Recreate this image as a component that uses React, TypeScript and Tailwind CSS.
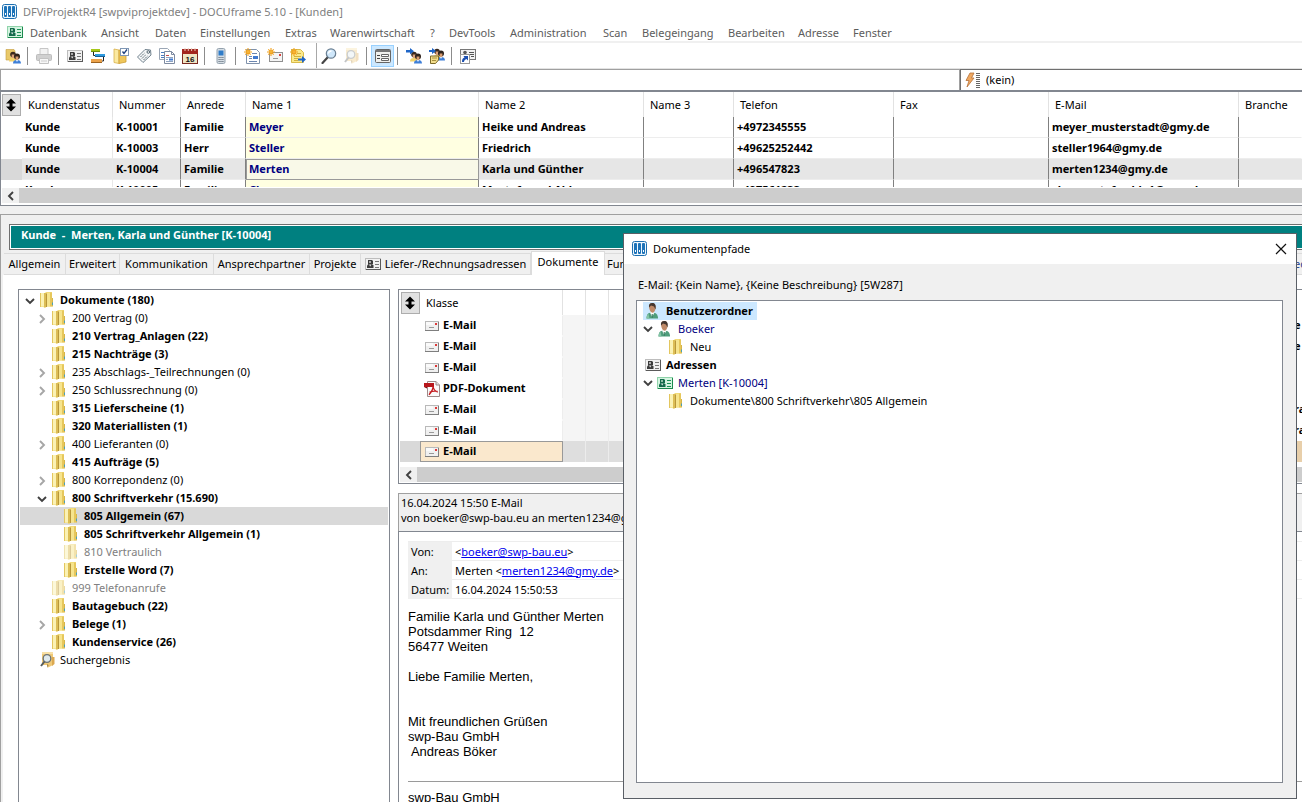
import type { ReactNode } from 'react'
import clsx from 'clsx'

interface IconProps {
  className?: string
}

function Svg({ children, className }: { children: ReactNode; className?: string }) {
  return (
    <svg viewBox="0 0 16 16" aria-hidden="true" className={clsx('w-4 h-4 shrink-0', className)}>
      {children}
    </svg>
  )
}

/* ---------- Icons ---------- */

function LogoIcon() {
  return (
    <Svg>
      <rect x="0.5" y="0.5" width="14" height="14" rx="2" fill="#eef7fd" stroke="#1c6fb0" />
      {[2, 6, 10].map(x => (
        <g key={x}>
          <rect x={x} y="2" width="3" height="11" rx="1" fill="#1c72b8" />
          <rect x={x + 1} y="9" width="1" height="2" fill="#fff" />
        </g>
      ))}
    </Svg>
  )
}

function CardIcon({ green }: { green?: boolean }) {
  const ink = green ? '#136b4c' : '#3c3c3c'
  return (
    <Svg>
      <rect x="0" y="2" width="16" height="12" fill={green ? '#8fd3aa' : '#bdbdbd'} />
      <path d="M1 13h15v1H1zM15 3h1v11h-1z" fill={green ? '#1d8a50' : '#5a5a5a'} />
      <rect x="1" y="3" width="14" height="10" fill={green ? '#d4f4e0' : '#f1f1f1'} />
      <path d="M3 4h4l1 1v3H3z" fill={ink} />
      <path d="M4 5h2v2H4z" fill={green ? '#8fc0a8' : '#aaa'} />
      <path d="M2 12V9.500l1.500-1.500h3.500L8.500 9.500V12z" fill={ink} />
      <path d="M4 8.500l1.200 2L6.500 8.500z" fill="#eee" />
      <path d="M10 5.500h4M10 8.500h4M10 11.500h4" stroke={green ? '#1c9159' : '#777'} />
    </Svg>
  )
}

function FolderIcon({ className }: IconProps) {
  return (
    <Svg className={className}>
      <path d="M0 1h5l1-1h6v14.500H6L4.500 16 3.500 15H0z" fill="#f2db7a" />
      <path d="M0 1h1v14H0z" fill="#e3c65f" />
      <path d="M1 1h3v13.500H1z" fill="#fbf2b4" />
      <path d="M4 1h2v14.500L4 15z" fill="#dcbd55" />
      <path d="M6 1.500h1V15H6z" fill="#b8973a" />
      <path d="M7 1h3v13.500H7z" fill="#f6e48e" />
      <path d="M10 .5h2V14.500h-2z" fill="#e6c75c" />
      <path d="M12 6h1v8.500h-1z" fill="#d7b548" />
      <path d="M12 10.500h1V13h-1z" fill="#4aa0b8" />
    </Svg>
  )
}

function SearchFolderIcon({ className }: IconProps) {
  return (
    <Svg className={className}>
      <path d="M2 0h11v13l-5 2.500L7 13H2z" fill="#eec877" />
      <path d="M12 5h2.500v7L12 14z" fill="#dba850" />
      <path d="M2 0h11v2H2z" fill="#f8e0a6" />
      <path d="M7 12l.5 4 1-3z" fill="#9b7a3a" />
      <circle cx="7" cy="6.500" r="3.800" fill="#dfe9ec" stroke="#6b7376" strokeWidth="1.300" />
      <path d="M4.500 9.500L1 14" stroke="#555c60" strokeWidth="2" />
    </Svg>
  )
}

function MailIcon() {
  return (
    <Svg>
      <rect x="1" y="3" width="14" height="10" fill="#b9b9b9" />
      <path d="M1 12h14v1H1zM14 4h1v9h-1z" fill="#7e7e7e" />
      <rect x="2" y="4" width="12" height="8" fill="#f0f0f0" />
      <path d="M2 4h7v3H2z" fill="#fafafa" />
      <rect x="11" y="5" width="2" height="2" fill="#dc3a3a" />
      <path d="M5 9.500h5" stroke="#999" />
    </Svg>
  )
}

function PdfIcon() {
  return (
    <Svg>
      <path d="M3.500.5h8.500l3.500 3.500v11.500h-12z" fill="#fafafa" stroke="#9e8a8a" />
      <path d="M12 .5V4h3.500" fill="#ddd" stroke="#9e8a8a" />
      <path d="M0 2h10v4H0z" fill="#b8161b" />
      <path d="M0 6h3v1.500z" fill="#7b0d10" />
      <path d="M9 5c.4 3.200-1.600 6-4 8.700M9 5c.2 3 1.800 5 4.800 6.200M5.500 11.300c2-1 5-1.500 8-1" fill="none" stroke="#c4191e" strokeWidth="1.300" />
    </Svg>
  )
}

function UserIcon() {
  return (
    <Svg>
      <path d="M1.500 15.500c0-4 1.500-6 5.500-6s6 2 6 6z" fill="#4f9d7c" />
      <path d="M1.500 15.500c0-2 .6-3.600 2-4.800l1 4.800z" fill="#83c4a5" />
      <path d="M5 9.500l2 4.500 2.500-4.500-2-1z" fill="#fff" />
      <path d="M6.700 11h1v3l-.5 1-.5-1z" fill="#256b4e" />
      <path d="M4 3.500C4 1 5.500 0 7.300 0 9.500 0 11 1.500 10.500 5c-.3 3-1.500 4.700-3 4.700S4.200 7 4 3.500z" fill="#c08a68" />
      <path d="M4 4.500C3.500 1.300 5 0 7.200 0c2.500 0 4.200 1.700 3.300 6.500l-1.500-3L6 2.500z" fill="#43362f" />
    </Svg>
  )
}

function PeopleShape() {
  return (
    <g>
      <circle cx="8" cy="6.500" r="2.800" fill="#3a2a20" />
      <path d="M6.700 6.500h3v3.500h-3z" fill="#dba27a" />
      <path d="M4 13.500c0-2.500 1-3.500 4-3.500s3 1 3 3.500z" fill="#f3d36a" />
      <circle cx="12" cy="8.500" r="3" fill="#2f231c" />
      <path d="M10.600 8.500h2.800v3.300h-2.800z" fill="#d99c70" />
      <path d="M8 15.500c0-2.600 1.500-3.500 4-3.500s4 1 4 3.500z" fill="#3e7fd8" />
      <path d="M11 12h2l-1 2z" fill="#fff" />
    </g>
  )
}

function FolderPeopleIcon() {
  return (
    <Svg>
      <path d="M1 1.500h8l1 1.500v9H1z" fill="#e9c96a" stroke="#c49c3c" strokeWidth=".6" />
      <PeopleShape />
    </Svg>
  )
}

function PrinterIcon() {
  return (
    <Svg>
      <path d="M4 .5h8V7H4z" fill="#f2f2f2" stroke="#c6c6c6" />
      <rect x=".5" y="6.500" width="15" height="6" rx="1" fill="#d0d0d0" stroke="#bdbdbd" />
      <path d="M3.500 10.500h9v5h-9z" fill="#f6f6f6" stroke="#c2c2c2" />
      <path d="M5 13h6" stroke="#ccc" />
    </Svg>
  )
}

function GanttIcon() {
  return (
    <Svg>
      <path d="M3.500 4v3.500H6M13.500 9v4H12" fill="none" stroke="#222" />
      <path d="M1 1h9v3H1z" fill="#a6c71a" />
      <path d="M1 3h9v1H1z" fill="#6f9010" />
      <path d="M5 6h10v3H5z" fill="#2f9be0" />
      <path d="M5 8h10v1H5z" fill="#1a5f94" />
      <path d="M1 11h11v4H1z" fill="#eba24a" />
      <path d="M1 14h11v1H1z" fill="#9c6320" />
    </Svg>
  )
}

function FolderCheckIcon() {
  return (
    <Svg>
      <path d="M1 1l5 1v13.500l-5-1z" fill="#fbe9a0" stroke="#d8b04a" strokeWidth=".8" />
      <path d="M6 2h7v12l-7 1.500z" fill="#efc65a" stroke="#cc9d35" strokeWidth=".8" />
      <rect x="7.500" y=".5" width="8" height="7" fill="#fff" stroke="#7f97b5" />
      <path d="M9.500 3.500l1.500 2 3-4" fill="none" stroke="#1d3f7d" strokeWidth="1.300" />
    </Svg>
  )
}

function TagIcon() {
  return (
    <Svg>
      <path d="M1.500 9L9 1.500l5.500.5.500 5L7 14.500z" fill="#f4f6f7" stroke="#71828e" />
      <circle cx="12.300" cy="4" r="1.300" fill="#fff" stroke="#51646f" />
      <path d="M4.500 9l4-4M6 10.500l4-4M7.500 12l4-4" stroke="#62727c" strokeDasharray="2 .6" />
    </Svg>
  )
}

function DocsIcon() {
  return (
    <Svg>
      <path d="M.5.500h8l2 2v9H.5z" fill="#fff" stroke="#9ba6b5" />
      <path d="M2 4.500h4M2 7.500h3M2 9.500h3" stroke="#4b7cc0" />
      <path d="M5.500 3.500h7l3 3v9h-10z" fill="#fff" stroke="#7d8aa0" />
      <path d="M12.500 3.500v3h3" fill="none" stroke="#7d8aa0" />
      <path d="M7 7.500h3" stroke="#c4504a" />
      <path d="M7 9.500h7M7 11.500h2M7 13.500h7" stroke="#8fa3bf" />
      <path d="M10 10.500h4v2h-4z" fill="#3f79d0" />
    </Svg>
  )
}

function CalendarIcon() {
  return (
    <Svg>
      <rect x=".5" y="1.500" width="15" height="14" fill="#efe5c4" stroke="#7b2a22" />
      <path d="M0 1h16v5H0z" fill="#a3251e" />
      <path d="M3 0v3M6.300 0v3M9.600 0v3M13 0v3" stroke="#e9c9b9" />
      <text x="8" y="13.500" fontSize="8" fontWeight="700" textAnchor="middle" fill="#111" fontFamily="Liberation Sans, sans-serif">16</text>
    </Svg>
  )
}

function PhoneIcon() {
  return (
    <Svg>
      <rect x="4" y=".5" width="8" height="15" rx="1.500" fill="#d5dde4" stroke="#93a1ad" />
      <rect x="5.500" y="2.500" width="5" height="5" fill="#2f7cc8" />
      <path d="M5.500 9.500h5M5.500 11.500h5M5.500 13.500h5" stroke="#5f6d7a" strokeDasharray="1.200 .7" />
    </Svg>
  )
}

function Spark() {
  return (
    <g stroke="#f0a11e" strokeWidth="1.100">
      <path d="M4 0v8M0 4h8M1.300 1.300l5.400 5.400M6.700 1.300L1.300 6.700" />
      <circle cx="4" cy="4" r="1.300" fill="#fbd25a" />
    </g>
  )
}

function NewDocIcon() {
  return (
    <Svg>
      <path d="M2.500 1.500h10l3 3v11h-13z" fill="#fff" stroke="#8092ab" />
      <path d="M8 5.500h5M5 8.500h3M5 10.500h3M5 13.500h8" stroke="#6b86b0" />
      <path d="M9 8h5v3H9z" fill="#3f79d0" />
      <Spark />
    </Svg>
  )
}

function NewMailIcon() {
  return (
    <Svg>
      <rect x="2.500" y="4.500" width="13" height="9" fill="#f4f4f4" stroke="#909090" />
      <path d="M6 10.500h5" stroke="#999" />
      <path d="M12 6h2v2h-2z" fill="#d8433c" />
      <Spark />
    </Svg>
  )
}

function NewExportIcon() {
  return (
    <Svg>
      <path d="M1.500 1.500h9l3 3v10h-12z" fill="#fbe98c" stroke="#d9bb4b" />
      <path d="M4 8.500h7M4 10.500h4M4 12.500h4M7 5.500h4" stroke="#d3b23d" />
      <path d="M8 10.500h4V8l4 3.500-4 3.500v-2.500H8z" fill="#1f66c8" />
      <Spark />
    </Svg>
  )
}

function MagnifierIcon() {
  return (
    <Svg>
      <path d="M6.500 9.500L1.500 15" stroke="#454545" strokeWidth="2.200" strokeLinecap="round" />
      <circle cx="10" cy="5.500" r="4.700" fill="#cfe7fa" stroke="#6a7f92" strokeWidth="1.200" />
      <path d="M7.500 5.500C7.700 3.700 9 3 10.500 3" stroke="#fff" strokeWidth="1.300" fill="none" />
    </Svg>
  )
}

function FormIcon() {
  return (
    <Svg>
      <rect x=".5" y="1.500" width="15" height="13" rx="1" fill="#f1f1ee" stroke="#666" />
      <path d="M1 3h14" stroke="#777" strokeWidth="2" />
      <path d="M2 7.500h3M2 10.500h3" stroke="#444" />
      <path d="M6.500 6.500h7v2h-7zM6.500 10.500h7v2h-7z" fill="#fff" stroke="#666" />
    </Svg>
  )
}

function ArrowPeopleIcon() {
  return (
    <Svg>
      <PeopleShape />
      <path d="M0 2h4V0l4 3.300-4 3.200V4.500H0z" fill="#1f66c8" />
    </Svg>
  )
}

function NotePeopleIcon() {
  return (
    <Svg>
      <g transform="translate(0 -3)"><PeopleShape /></g>
      <path d="M0 2h3V0l4 3-4 3V4H0z" fill="#1f66c8" />
      <path d="M1.500 8h8v4l-3 3.500h-5z" fill="#f2dd8c" stroke="#7d6a2a" />
      <path d="M3 10h5M3 12.500h4" stroke="#a8903e" />
    </Svg>
  )
}

function CardLinkIcon() {
  return (
    <Svg>
      <rect x=".5" y="1.500" width="15" height="10" fill="#f2f2f2" stroke="#777" />
      <circle cx="5" cy="4.500" r="1.800" fill="#555" />
      <path d="M9 4.500h5M9 6.500h5M11 8.500h3" stroke="#555" />
      <rect x=".5" y="6.500" width="9" height="9" fill="#fff" stroke="#999" />
      <path d="M2 14c0-3 1-4 2.500-4.500L3.500 8H8v4.500L6.500 11C5 11.500 4 12.500 4 14z" fill="#1b4fb0" />
    </Svg>
  )
}

function BoltIcon() {
  return (
    <Svg>
      <path d="M5 1h4L6.500 6H9L2 15l2-6.500H1z" fill="#f0a860" stroke="#b5713a" strokeWidth=".8" />
      <path d="M11 1.500h4M11 3.500h4M11 5.500h4M11 7.500h4M11 9.500h4M11 11.500h4M11 13.500h4M11 15.500h4" stroke="#666" />
    </Svg>
  )
}

function SortIcon() {
  return (
    <Svg>
      <path d="M8 1.500l5 5H9.500v3H13l-5 5-5-5h3.500v-3H3z" fill="#000" />
    </Svg>
  )
}

function Chevron({ open, className }: { open?: boolean; className?: string }) {
  return (
    <svg viewBox="0 0 10 10" aria-hidden="true" className={clsx('w-[10px] h-[10px]', className)}>
      <path
        d={open ? 'M1 3l4 4 4-4' : 'M3 1l4 4-4 4'}
        fill="none"
        stroke={open ? '#404040' : '#a6a6a6'}
        strokeWidth="1.900"
      />
    </svg>
  )
}

/* ---------- Data ---------- */

const MENU = [
  { label: 'Datenbank', w: 'w-[71px]' },
  { label: 'Ansicht', w: 'w-[54px]' },
  { label: 'Daten', w: 'w-[45px]' },
  { label: 'Einstellungen', w: 'w-[85px]' },
  { label: 'Extras', w: 'w-[45px]' },
  { label: 'Warenwirtschaft', w: 'w-[100px]' },
  { label: '?', w: 'w-[19px]' },
  { label: 'DevTools', w: 'w-[61px]' },
  { label: 'Administration', w: 'w-[93px]' },
  { label: 'Scan', w: 'w-[39px]' },
  { label: 'Belegeingang', w: 'w-[86px]' },
  { label: 'Bearbeiten', w: 'w-[70px]' },
  { label: 'Adresse', w: 'w-[55px]' },
  { label: 'Fenster', w: 'w-[55px]' },
]

const TOOLS: ({ label: string; icon: ReactNode; active?: boolean } | '|' | '||')[] = [
  { label: 'Ordner', icon: <FolderPeopleIcon /> },
  '|',
  { label: 'Drucken', icon: <PrinterIcon /> },
  '|',
  { label: 'Adresse', icon: <CardIcon /> },
  { label: 'Projektplan', icon: <GanttIcon /> },
  { label: 'Aufgaben', icon: <FolderCheckIcon /> },
  { label: 'Kennzeichen', icon: <TagIcon /> },
  { label: 'Dokumente', icon: <DocsIcon /> },
  { label: 'Kalender', icon: <CalendarIcon /> },
  '|',
  { label: 'Telefon', icon: <PhoneIcon /> },
  '|',
  { label: 'Neues Dokument', icon: <NewDocIcon /> },
  { label: 'Neue E-Mail', icon: <NewMailIcon /> },
  { label: 'Neuer Export', icon: <NewExportIcon /> },
  '||',
  { label: 'Suchen', icon: <MagnifierIcon /> },
  { label: 'Suchergebnis', icon: <SearchFolderIcon className="opacity-35" /> },
  '|',
  { label: 'Formular', icon: <FormIcon />, active: true },
  '|',
  { label: 'Zuordnen', icon: <ArrowPeopleIcon /> },
  { label: 'Notiz zuordnen', icon: <NotePeopleIcon /> },
  '|',
  { label: 'Verknüpfung', icon: <CardLinkIcon /> },
]

const COLUMNS = [
  { label: 'Kundenstatus', w: 'w-[91px]' },
  { label: 'Nummer', w: 'w-[68px]' },
  { label: 'Anrede', w: 'w-[65px]' },
  { label: 'Name 1', w: 'w-[233px]' },
  { label: 'Name 2', w: 'w-[165px]' },
  { label: 'Name 3', w: 'w-[90px]' },
  { label: 'Telefon', w: 'w-[160px]' },
  { label: 'Fax', w: 'w-[155px]' },
  { label: 'E-Mail', w: 'w-[190px]' },
  { label: 'Branche', w: '' },
]

const CUSTOMERS = [
  ['Kunde', 'K-10001', 'Familie', 'Meyer', 'Heike und Andreas', '', '+4972345555', '', 'meyer_musterstadt@gmy.de', ''],
  ['Kunde', 'K-10003', 'Herr', 'Steller', 'Friedrich', '', '+49625252442', '', 'steller1964@gmy.de', ''],
  ['Kunde', 'K-10004', 'Familie', 'Merten', 'Karla und Günther', '', '+496547823', '', 'merten1234@gmy.de', ''],
  ['Kunde', 'K-10005', 'Familie', 'Cher', 'Mustafa und Abla', '', '+497561233', '', 'chermustafa.abla1@gmy.de', ''],
]

const TABS = [
  { label: 'Allgemein', w: 'w-[62px]' },
  { label: 'Erweitert', w: 'w-[54px]' },
  { label: 'Kommunikation', w: 'w-[94px]' },
  { label: 'Ansprechpartner', w: 'w-[96px]' },
  { label: 'Projekte', w: 'w-[51px]' },
  { label: 'Liefer-/Rechnungsadressen', w: 'w-[170px]', icon: true },
  { label: 'Dokumente', w: 'w-[74px]', active: true },
]

interface Node {
  label: string
  level: 0 | 1 | 2
  bold?: boolean
  faded?: boolean
  selected?: boolean
  toggle?: 'open' | 'closed'
  search?: boolean
}

const TREE: Node[] = [
  { label: 'Dokumente (180)', level: 0, bold: true, toggle: 'open' },
  { label: '200 Vertrag (0)', level: 1, toggle: 'closed' },
  { label: '210 Vertrag_Anlagen (22)', level: 1, bold: true },
  { label: '215 Nachträge (3)', level: 1, bold: true },
  { label: '235 Abschlags-_Teilrechnungen (0)', level: 1, toggle: 'closed' },
  { label: '250 Schlussrechnung (0)', level: 1, toggle: 'closed' },
  { label: '315 Lieferscheine (1)', level: 1, bold: true },
  { label: '320 Materiallisten (1)', level: 1, bold: true },
  { label: '400 Lieferanten (0)', level: 1, toggle: 'closed' },
  { label: '415 Aufträge (5)', level: 1, bold: true },
  { label: '800 Korrepondenz (0)', level: 1, toggle: 'closed' },
  { label: '800 Schriftverkehr (15.690)', level: 1, bold: true, toggle: 'open' },
  { label: '805 Allgemein (67)', level: 2, bold: true, selected: true },
  { label: '805 Schriftverkehr Allgemein (1)', level: 2, bold: true },
  { label: '810 Vertraulich', level: 2, faded: true },
  { label: 'Erstelle Word (7)', level: 2, bold: true },
  { label: '999 Telefonanrufe', level: 1, faded: true },
  { label: 'Bautagebuch (22)', level: 1, bold: true },
  { label: 'Belege (1)', level: 1, bold: true, toggle: 'closed' },
  { label: 'Kundenservice (26)', level: 1, bold: true },
  { label: 'Suchergebnis', level: 0, search: true },
]

const DOCS = [
  { label: 'E-Mail', end: 'e' },
  { label: 'E-Mail', end: 'e' },
  { label: 'E-Mail', end: '' },
  { label: 'PDF-Dokument', end: '' },
  { label: 'E-Mail', end: 'ra' },
  { label: 'E-Mail', end: 'ra' },
  { label: 'E-Mail', end: '', selected: true },
]

const INDENT = { 0: 'pl-0', 1: 'pl-3', 2: 'pl-6' }

/* ---------- Parts ---------- */

function SortButton() {
  return (
    <button aria-label="Sortieren" className="block w-[19px] h-[22px] border border-[#adadad] bg-[#e1e1e1]">
      <SortIcon />
    </button>
  )
}

function ScrollBar() {
  return (
    <div className="flex h-[15px] shrink-0 bg-[#cdcdcd]">
      <button aria-label="Nach links" className="w-[17px] flex items-center justify-center bg-[#f0f0f0]">
        <svg viewBox="0 0 10 10" aria-hidden="true" className="w-[10px] h-[10px]">
          <path d="M7 1L3 5l4 4" fill="none" stroke="#404040" strokeWidth="1.900" />
        </svg>
      </button>
    </div>
  )
}

function Toolbar() {
  return (
    <div className="flex h-[25px] shrink-0 pl-px">
      {TOOLS.map((tool, i) => {
        if (tool === '|') return <span key={i} className="w-2 pl-[3px] py-1"><span className="block w-px h-[18px] bg-[#8c8c8c]" /></span>
        if (tool === '||') return <span key={i} className="w-2 border-r border-[#a8a8a8]" />
        return (
          <button
            key={i}
            title={tool.label}
            className={clsx(
              'w-[23px] h-[22px] mt-[2px] flex items-center justify-center',
              tool.active && 'border border-[#99d1ff] bg-[#cce8ff]',
            )}
          >
            {tool.icon}
          </button>
        )
      })}
    </div>
  )
}

function CustomerGrid() {
  return (
    <section className="shrink-0 border-l border-b border-[#828790] bg-white pb-[2px]">
      <div className="h-[95px] mb-px overflow-hidden">
        <table className="w-full table-fixed border-separate border-spacing-0">
          <thead>
            <tr className="h-[25px]">
              <th className="w-[21px] p-0 pt-px pl-px"><SortButton /></th>
              {COLUMNS.map(c => (
                <th
                  key={c.label}
                  className={clsx(
                    'p-0 pb-px pl-[6px] text-left font-normal border-r',
                    c.label === 'Branche' ? 'border-transparent' : 'border-[#e2e2e2]',
                    c.w,
                  )}
                >
                  {c.label}
                </th>
              ))}
            </tr>
          </thead>
          <tbody>
            {CUSTOMERS.map((row, r) => {
              const selected = r === 2
              return (
                <tr key={row[1]} className={clsx('h-[21px] font-bold', selected && 'bg-[#e6e6e6]')}>
                  <td className={clsx('p-0', selected && 'bg-[#d9d9d9]')} />
                  {row.map((cell, c) => (
                    <td
                      key={c}
                      className={clsx(
                        'p-0 pb-[2px] pl-[3px] whitespace-nowrap border-b border-b-[#ededed] border-r',
                        c === 0 ? 'border-r-[#e8e8e8]' : c === 9 ? 'border-r-transparent' : 'border-r-[#808080]',
                        c === 3 && 'text-[#000080]',
                        c === 3 && !selected && 'bg-[#ffffe1]',
                        c === 3 && selected && 'bg-[#f9f9e8] outline outline-[#999] -outline-offset-1',
                      )}
                    >
                      {cell}
                    </td>
                  ))}
                </tr>
              )
            })}
          </tbody>
        </table>
      </div>
      <div className="pl-px"><ScrollBar /></div>
    </section>
  )
}

function TreeRow({ node }: { node: Node }) {
  return (
    <li
      role="treeitem"
      aria-selected={!!node.selected}
      className={clsx(
        'flex items-center h-[18px] whitespace-nowrap',
        INDENT[node.level],
        node.bold && 'font-bold',
        node.faded && 'text-[#808080]',
        node.selected && 'bg-[#d9d9d9]',
      )}
    >
      <span className="w-5 flex justify-center">
        {node.toggle && (
          <button aria-label={node.toggle === 'open' ? 'Zuklappen' : 'Aufklappen'}>
            <Chevron open={node.toggle === 'open'} className="mt-px" />
          </button>
        )}
      </span>
      {node.search ? <SearchFolderIcon /> : <FolderIcon className={node.faded ? 'opacity-50' : undefined} />}
      <span className="ml-1 pb-[2px]">{node.label}</span>
    </li>
  )
}

function DocumentList() {
  return (
    <div className="border border-r-0 border-[#828790] pl-px pb-px">
      <table className="w-full table-fixed border-separate border-spacing-0">
        <thead>
          <tr className="h-[25px]">
            <th className="w-5 p-0 pl-px"><SortButton /></th>
            <th className="w-[143px] p-0 pl-[6px] text-left font-normal border-r border-[#e2e2e2]">Klasse</th>
            <th className="w-[23px] p-0 border-r border-[#e2e2e2]" />
            <th className="w-[23px] p-0 border-r border-[#e2e2e2]" />
            <th className="p-0" />
            <th className="w-[8px] p-0" />
          </tr>
        </thead>
        <tbody>
          {DOCS.map((doc, i) => {
            const filler = clsx('p-0 border-r', doc.selected ? 'bg-[#dedede] border-[#ececec]' : 'bg-[#f5f5f5] border-[#ededed]')
            return (
              <tr key={i} className="h-[21px] font-bold">
                <td className={clsx('p-0', doc.selected && 'bg-[#d9d9d9]')} />
                <td className={clsx('p-0 border', doc.selected ? 'bg-[#fae8cd] border-[#999]' : 'border-transparent border-r-[#ededed]')}>
                  <span className="flex items-center gap-[3px] pl-[3px]">
                    {doc.label === 'E-Mail' ? <MailIcon /> : <PdfIcon />}
                    <span className="pb-[2px]">{doc.label}</span>
                  </span>
                </td>
                <td className={filler} />
                <td className={filler} />
                <td className={filler} />
                <td className={clsx('p-0 pb-[2px] whitespace-nowrap overflow-hidden', doc.selected && 'bg-[#e8cfaa]')}>{doc.end}</td>
              </tr>
            )
          })}
        </tbody>
      </table>
      <div className="h-[5px]" />
      <ScrollBar />
    </div>
  )
}

function MailPreview() {
  const head = 'p-0 pl-[3px] w-11 text-left font-normal bg-[#f0f0f0]'
  const value = 'p-0 pl-[3px] border-b border-[#ededed]'
  const link = 'text-[#0000ee] underline'
  return (
    <article className="flex-1 min-h-0 overflow-hidden pl-[9px] pt-[9px] border-l border-t border-[#828790]">
      <table className="w-full table-fixed border-separate border-spacing-0 border-t border-[#ededed]">
        <tbody>
          <tr className="h-[19px]">
            <th className={head}>Von:</th>
            <td className={value}>&lt;<a href="#von" className={link}>boeker@swp-bau.eu</a>&gt;</td>
          </tr>
          <tr className="h-[19px]">
            <th className={head}>An:</th>
            <td className={value}>Merten &lt;<a href="#an" className={link}>merten1234@gmy.de</a>&gt;</td>
          </tr>
          <tr className="h-[19px]">
            <th className={head}>Datum:</th>
            <td className={value}>16.04.2024 15:50:53</td>
          </tr>
        </tbody>
      </table>
      <div className="mt-[10px] whitespace-pre text-[13px] leading-[15px] font-['Liberation_Sans',sans-serif]">
        <p>{'Familie Karla und Günther Merten\nPotsdammer Ring  12\n56477 Weiten'}</p>
        <p className="mt-[15px]">Liebe Familie Merten,</p>
        <p className="mt-[30px]">{'Mit freundlichen Grüßen\nswp-Bau GmbH\n Andreas Böker'}</p>
        <hr className="mt-[22px] mb-2 border-[#9a9a9a]" />
        <p>swp-Bau GmbH</p>
      </div>
    </article>
  )
}

function PathsDialog() {
  return (
    <div
      role="dialog"
      aria-labelledby="paths-title"
      className="fixed right-[5px] top-[233px] bottom-[3px] w-[674px] flex flex-col border border-[#5a5f66] bg-[#f0f0f0]"
    >
      <header className="flex items-center h-[30px] shrink-0 pl-2 pr-[7px] pb-px bg-white">
        <LogoIcon />
        <h2 id="paths-title" className="ml-[5px] pb-px flex-1">Dokumentenpfade</h2>
        <button aria-label="Schließen" className="w-4 h-4 flex items-center justify-center">
          <svg viewBox="0 0 12 12" aria-hidden="true" className="w-3 h-3">
            <path d="M1 1l10 10M11 1L1 11" stroke="#111" strokeWidth="1.200" />
          </svg>
        </button>
      </header>
      <p className="h-9 shrink-0 pl-[14px] pt-3 leading-[18px]">E-Mail: {'{Kein Name}'}, {'{Keine Beschreibung}'} [5W287]</p>
      <ul
        role="tree"
        className="flex-1 ml-3 mr-[13px] mb-[15px] pt-px border border-[#828790] bg-white [&>li]:flex [&>li]:items-center [&>li]:h-[18px] [&_b]:pb-[2px] [&_b]:ml-[5px] [&_i]:pb-[2px] [&_i]:ml-[5px] [&_i]:not-italic"
      >
        <li role="treeitem" className="ml-[6px] pl-[2px] pr-1 w-fit bg-[#cce8ff]"><UserIcon /><b>Benutzerordner</b></li>
        <li role="treeitem" className="pl-[6px] text-[#000080]">
          <button aria-label="Zuklappen" className="mr-1"><Chevron open /></button>
          <UserIcon /><i>Boeker</i>
        </li>
        <li role="treeitem" className="pl-8"><FolderIcon /><i>Neu</i></li>
        <li role="treeitem" className="pl-2"><CardIcon /><b>Adressen</b></li>
        <li role="treeitem" className="pl-[6px] text-[#000080]">
          <button aria-label="Zuklappen" className="mr-1"><Chevron open /></button>
          <CardIcon green /><i>Merten [K-10004]</i>
        </li>
        <li role="treeitem" className="pl-8"><FolderIcon /><i>Dokumente\800 Schriftverkehr\805 Allgemein</i></li>
      </ul>
    </div>
  )
}

export default function App() {
  return (
    <div className="h-screen flex flex-col overflow-hidden bg-white text-black text-[11px] leading-[15px] font-['Noto_Sans','Open_Sans',sans-serif]">
      {/* Title bar */}
      <header className="flex items-center gap-[5px] h-[23px] shrink-0 pl-[2px] text-[#808080]">
        <LogoIcon />
        <h1>DFViProjektR4 [swpviprojektdev] - DOCUframe 5.10 - [Kunden]</h1>
      </header>

      {/* Menu */}
      <nav className="flex items-center h-5 shrink-0 pl-[7px] border-b-2 border-[#f0f0f0] text-[#5c5c5c]">
        <span className="w-[23px]"><CardIcon green /></span>
        {MENU.map(item => (
          <button key={item.label} className={clsx('text-left', item.w)}>{item.label}</button>
        ))}
      </nav>

      <Toolbar />

      {/* Filter row */}
      <div className="flex h-6 shrink-0 border-t border-t-[#e3e3e3] border-b-2 border-b-[#828790]">
        <input aria-label="Filter" className="flex-1 min-w-0 border border-b-0 border-[#a0a0a0] outline-none" />
        <button className="w-[342px] flex items-center pl-1 border-l border-t border-[#6f6f6f] text-left">
          <BoltIcon />
          <span className="ml-[5px] pb-[2px]">(kein)</span>
        </button>
      </div>

      <CustomerGrid />

      {/* Detail form */}
      <main className="flex-1 min-h-0 flex flex-col mt-2 border-l border-t border-[#a0a0a0] bg-[#f0f0f0] ring-8 ring-[#f0f0f0]">
        <div className="shrink-0 ml-2 mt-[9px] border border-r-0 border-[#6f6f6f] bg-white p-px pr-0">
          <h2 className="h-[22px] pl-[10px] bg-[#008080] leading-[18px] font-bold text-white whitespace-pre">Kunde  -  Merten, Karla und Günther [K-10004]</h2>
        </div>

        <div role="tablist" className="shrink-0 flex items-end h-[25px] pl-[3px]">
          {TABS.map(tab => (
            <button
              key={tab.label}
              role="tab"
              aria-selected={!!tab.active}
              className={clsx(
                'flex items-center justify-center gap-1 whitespace-nowrap border-t border-r border-[#dcdcdc]',
                tab.w,
                tab.active ? 'h-6 pb-1 bg-white border-l' : 'h-[22px] pb-px border-b',
              )}
            >
              {tab.icon && <CardIcon />}
              {tab.label}
            </button>
          ))}
          <button role="tab" className="flex-1 h-[22px] pb-[2px] pl-[2px] text-left border-t border-b border-[#dcdcdc]">Funktionen</button>
          <button role="tab" className="w-[8px] h-[22px] pb-[2px] overflow-hidden border-t border-b border-[#dcdcdc] text-[#1f3f8f]">ed</button>
        </div>

        <div className="flex-1 min-h-0 flex ml-[2px] pt-[14px] pl-[15px] bg-white">
          <ul role="tree" className="w-[372px] shrink-0 px-px pt-px border border-b-0 border-[#828790] overflow-hidden">
            {TREE.map(node => <TreeRow key={node.label} node={node} />)}
          </ul>

          <div className="flex-1 min-w-0 ml-2 flex flex-col">
            <DocumentList />
            <div className="shrink-0 mt-[9px] h-[38px] pl-[2px] pt-px border-l border-t border-[#a0a0a0] bg-[#f0f0f0]">
              <p>16.04.2024 15:50 E-Mail</p>
              <p>von boeker@swp-bau.eu an merten1234@gmy.de</p>
            </div>
            <MailPreview />
          </div>
        </div>
      </main>

      <PathsDialog />
    </div>
  )
}
